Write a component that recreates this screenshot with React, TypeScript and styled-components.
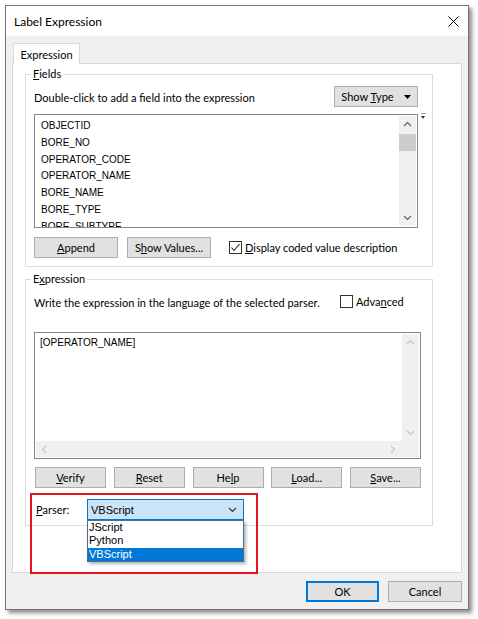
import React from 'react';
import styled, { createGlobalStyle, css } from 'styled-components';

const GlobalStyle = createGlobalStyle`
  html, body {
    margin: 0;
    padding: 0;
    background: #ffffff;
  }
  body {
    font-family: Lato, "Noto Sans", sans-serif;
    font-size: 11px;
    color: #000;
  }
  * {
    box-sizing: border-box;
  }
`;

const uiFont = css`
  font-family: Lato, "Noto Sans", sans-serif;
  font-size: 11px;
  white-space: nowrap;
`;

const listFont = css`
  font-family: "Liberation Sans", Arial, sans-serif;
  font-size: 10px;
`;

const Page = styled.div`
  position: relative;
  width: 478px;
  height: 619px;
  padding: 5px 0 0 5px;
  overflow: hidden;
`;

const Window = styled.div`
  width: 464px;
  height: 605px;
  display: flex;
  flex-direction: column;
  border: 1px solid #767676;
  background: #f0f0f0;
  box-shadow: 3px 3px 4px rgba(0, 0, 0, 0.45);
`;

const TitleBar = styled.div`
  height: 30px;
  flex: none;
  display: flex;
  align-items: center;
  justify-content: space-between;
  padding: 0 9px 0 8px;
  background: #ffffff;
`;

const Title = styled.span`
  font-family: Lato, "Noto Sans", sans-serif;
  font-size: 12px;
`;

const Body = styled.div`
  flex: 1;
  display: flex;
  flex-direction: column;
  padding: 7px 6px 7px 6px;
`;

const Tab = styled.div`
  width: 67px;
  height: 21px;
  margin: 0 0 -1px 1px;
  position: relative;
  z-index: 1;
  display: flex;
  align-items: center;
  justify-content: center;
  background: #ffffff;
  border: 1px solid #d9d9d9;
  border-bottom: none;
  ${uiFont};
`;

const TabPanel = styled.div`
  flex: 1;
  display: flex;
  flex-direction: column;
  gap: 5px;
  padding: 3px 0 0 12px;
  background: #ffffff;
  border: 1px solid #d9d9d9;
`;

const Group = styled.fieldset<{ $padRight: number; $padBottom: number }>`
  width: 408px;
  margin: 0;
  min-width: 0;
  padding: 5px ${p => p.$padRight}px ${p => p.$padBottom}px 8px;
  border: 1px solid #dcdcdc;
`;

const Legend = styled.legend`
  margin-left: -3px;
  padding: 0 2px;
  line-height: 14px;
  ${uiFont};
`;

const Row = styled.div<{ $gap?: number; $top?: number }>`
  display: flex;
  align-items: center;
  gap: ${p => p.$gap ?? 0}px;
  margin-top: ${p => p.$top ?? 0}px;
  min-height: 21px;
`;

const Hint = styled.span`
  flex: 1;
  padding-top: 2px;
  ${uiFont};
`;

const Button = styled.button<{ $w: number; $default?: boolean }>`
  width: ${p => p.$w}px;
  height: 21px;
  flex: none;
  padding: 0;
  display: flex;
  align-items: center;
  justify-content: center;
  gap: 10px;
  background: #e1e1e1;
  border: 1px solid ${p => (p.$default ? '#0078d7' : '#adadad')};
  box-shadow: ${p => (p.$default ? 'inset 0 0 0 1px #0078d7' : 'none')};
  color: #000;
  ${uiFont};
`;

const ButtonStrip = styled.div`
  display: flex;
  justify-content: space-between;
  margin-top: 8px;
  padding-left: 1px;
`;

const CheckLabel = styled.label<{ $w?: number }>`
  display: flex;
  align-items: center;
  gap: 3px;
  width: ${p => (p.$w ? `${p.$w}px` : 'auto')};
  ${uiFont};
`;

const CheckBox = styled.span`
  width: 13px;
  height: 13px;
  flex: none;
  display: flex;
  align-items: center;
  justify-content: center;
  border: 1px solid #333333;
  background: #ffffff;
`;

const ListWrap = styled.div`
  position: relative;
  margin-top: 7px;
`;

const ListBox = styled.div<{ $h: number }>`
  height: ${p => p.$h}px;
  display: flex;
  border: 1px solid #828790;
  background: #ffffff;
`;

const ListItems = styled.div`
  flex: 1;
  overflow: hidden;
  padding: 3px 0 0 6px;
`;

const ListItem = styled.div`
  height: 16.8px;
  line-height: 16.8px;
  white-space: nowrap;
  ${listFont};
`;

// the small menu arrow that sits just outside the list's top-right corner
const ListMenuMark = styled.span`
  position: absolute;
  top: -1px;
  right: -8px;
  width: 5px;
  height: 7px;
  border-top: 1px solid #9a9a9a;
  &::after {
    content: '';
    position: absolute;
    left: 0;
    top: 2px;
    border-left: 2.5px solid transparent;
    border-right: 2.5px solid transparent;
    border-top: 3px solid #333;
  }
`;

const VScroll = styled.div<{ $tail?: number }>`
  width: 17px;
  flex: none;
  display: flex;
  flex-direction: column;
  margin: 1px 1px ${p => p.$tail ?? 1}px 0;
  background: #f0f0f0;
`;

const ScrollArrow = styled.div`
  height: 17px;
  flex: none;
  display: flex;
  align-items: center;
  justify-content: center;
`;

const ScrollTrack = styled.div`
  flex: 1;
  padding-top: 1px;
`;

const ScrollThumb = styled.div`
  height: 17px;
  background: #cdcdcd;
`;

const Editor = styled.div`
  height: 127px;
  margin-top: 20px;
  display: flex;
  flex-direction: column;
  border: 1px solid #828790;
  background: #ffffff;
`;

const EditorMain = styled.div`
  flex: 1;
  display: flex;
  min-height: 0;
`;

const EditorText = styled.div`
  flex: 1;
  padding: 3px 5px;
  line-height: 14px;
  ${listFont};
`;

const HScroll = styled.div`
  height: 16px;
  flex: none;
  display: flex;
  align-items: center;
  justify-content: space-between;
  padding: 0 22px 0 4px;
  margin: 0 1px 1px 1px;
  background: #f0f0f0;
`;

const ParserRow = styled.div`
  display: flex;
  align-items: center;
  margin-top: 11px;
  padding-left: 2px;
`;

const ParserLabel = styled.span`
  width: 51px;
  ${uiFont};
`;

const ComboWrap = styled.div`
  position: relative;
  width: 157px;
`;

const Combo = styled.div`
  height: 21px;
  display: flex;
  align-items: center;
  justify-content: space-between;
  padding: 0 6px 0 3px;
  background: #cce4f7;
  border: 1px solid #0078d7;
  ${listFont};
  font-size: 11px;
`;

const DropList = styled.div`
  position: absolute;
  top: 100%;
  left: 0;
  width: 100%;
  z-index: 2;
  border: 1px solid #4a6e8f;
  background: #ffffff;
  box-shadow: 2px 2px 3px rgba(0, 0, 0, 0.3);
`;

const DropItem = styled.div<{ $selected?: boolean }>`
  height: 13.3px;
  line-height: 13.3px;
  padding-left: 1px;
  background: ${p => (p.$selected ? '#0078d7' : 'transparent')};
  color: ${p => (p.$selected ? '#ffffff' : '#000000')};
  ${listFont};
  font-size: 11px;
`;

const Footer = styled.div`
  display: flex;
  justify-content: flex-end;
  gap: 9px;
  margin-top: 8px;
`;

// red callout frame drawn around the parser picker
const Highlight = styled.div`
  position: absolute;
  left: 30px;
  top: 493px;
  width: 228px;
  height: 81px;
  border: 2px solid #e8141b;
  z-index: 3;
  pointer-events: none;
`;

type Dir = 'up' | 'down' | 'left' | 'right';

const chevronPoints: Record<Dir, string> = {
  up: '1,6 4.5,2.5 8,6',
  down: '1,3 4.5,6.5 8,3',
  left: '6,1 2.5,4.5 6,8',
  right: '3,1 6.5,4.5 3,8',
};

const Chevron = ({ dir, color = '#606060' }: { dir: Dir; color?: string }) => (
  <svg width="9" height="9" viewBox="0 0 9 9">
    <polyline points={chevronPoints[dir]} fill="none" stroke={color} strokeWidth="1.2" />
  </svg>
);

const CloseIcon = () => (
  <svg width="11" height="11" viewBox="0 0 11 11">
    <path d="M0.5 0.5 L10.5 10.5 M10.5 0.5 L0.5 10.5" stroke="#000" strokeWidth="1" />
  </svg>
);

const CheckMark = () => (
  <svg width="11" height="11" viewBox="0 0 11 11">
    <polyline points="1.5,5.5 4,8.5 9.5,2" fill="none" stroke="#222" strokeWidth="1.1" />
  </svg>
);

const fields = [
  'OBJECTID',
  'BORE_NO',
  'OPERATOR_CODE',
  'OPERATOR_NAME',
  'BORE_NAME',
  'BORE_TYPE',
  'BORE_SUBTYPE',
];

const parsers = ['JScript', 'Python', 'VBScript'];

export default function App() {
  return (
    <>
      <GlobalStyle />
      <Page>
        <Window>
          <TitleBar>
            <Title>Label Expression</Title>
            <CloseIcon />
          </TitleBar>
          <Body>
            <Tab>Expression</Tab>
            <TabPanel>
              <Group $padRight={14} $padBottom={8}>
                <Legend>
                  <u>F</u>ields
                </Legend>
                <Row>
                  <Hint>Double-click to add a field into the expression</Hint>
                  <Button $w={84}>
                    <span>
                      Show <u>T</u>ype
                    </span>
                    <svg width="7" height="4" viewBox="0 0 7 4">
                      <polygon points="0,0 7,0 3.5,4" fill="#000" />
                    </svg>
                  </Button>
                </Row>
                <ListWrap>
                  <ListBox $h={114}>
                    <ListItems>
                      {fields.map(f => (
                        <ListItem key={f}>{f}</ListItem>
                      ))}
                    </ListItems>
                    <VScroll>
                      <ScrollArrow>
                        <Chevron dir="up" />
                      </ScrollArrow>
                      <ScrollTrack>
                        <ScrollThumb />
                      </ScrollTrack>
                      <ScrollArrow>
                        <Chevron dir="down" />
                      </ScrollArrow>
                    </VScroll>
                  </ListBox>
                  <ListMenuMark />
                </ListWrap>
                <Row $gap={9} $top={9}>
                  <Button $w={84}>
                    <span>
                      <u>A</u>ppend
                    </span>
                  </Button>
                  <Button $w={84}>
                    <span>
                      S<u>h</u>ow Values...
                    </span>
                  </Button>
                  <CheckLabel style={{ marginLeft: 9 }}>
                    <CheckBox>
                      <CheckMark />
                    </CheckBox>
                    <span>
                      <u>D</u>isplay coded value description
                    </span>
                  </CheckLabel>
                </Row>
              </Group>

              <Group $padRight={11} $padBottom={5}>
                <Legend>
                  E<u>x</u>pression
                </Legend>
                <Row>
                  <Hint>Write the expression in the language of the selected parser.</Hint>
                  <CheckLabel $w={81}>
                    <CheckBox />
                    <span>
                      Adva<u>n</u>ced
                    </span>
                  </CheckLabel>
                </Row>
                <Editor>
                  <EditorMain>
                    <EditorText>[OPERATOR_NAME]</EditorText>
                    <VScroll $tail={0}>
                      <ScrollArrow>
                        <Chevron dir="up" color="#c6c6c6" />
                      </ScrollArrow>
                      <ScrollTrack />
                      <ScrollArrow>
                        <Chevron dir="down" color="#c6c6c6" />
                      </ScrollArrow>
                    </VScroll>
                  </EditorMain>
                  <HScroll>
                    <Chevron dir="left" color="#c6c6c6" />
                    <Chevron dir="right" color="#c6c6c6" />
                  </HScroll>
                </Editor>
                <ButtonStrip>
                  <Button $w={71}>
                    <span>
                      <u>V</u>erify
                    </span>
                  </Button>
                  <Button $w={71}>
                    <span>
                      <u>R</u>eset
                    </span>
                  </Button>
                  <Button $w={71}>
                    <span>
                      He<u>l</u>p
                    </span>
                  </Button>
                  <Button $w={71}>
                    <span>
                      <u>L</u>oad...
                    </span>
                  </Button>
                  <Button $w={71}>
                    <span>
                      <u>S</u>ave...
                    </span>
                  </Button>
                </ButtonStrip>
                <ParserRow>
                  <ParserLabel>
                    <u>P</u>arser:
                  </ParserLabel>
                  <ComboWrap>
                    <Combo>
                      <span>VBScript</span>
                      <Chevron dir="down" color="#333" />
                    </Combo>
                    <DropList>
                      {parsers.map(p => (
                        <DropItem key={p} $selected={p === 'VBScript'}>
                          {p}
                        </DropItem>
                      ))}
                    </DropList>
                  </ComboWrap>
                </ParserRow>
              </Group>
            </TabPanel>
            <Footer>
              <Button $w={73} $default>
                OK
              </Button>
              <Button $w={74}>Cancel</Button>
            </Footer>
          </Body>
        </Window>
        <Highlight />
      </Page>
    </>
  );
}
